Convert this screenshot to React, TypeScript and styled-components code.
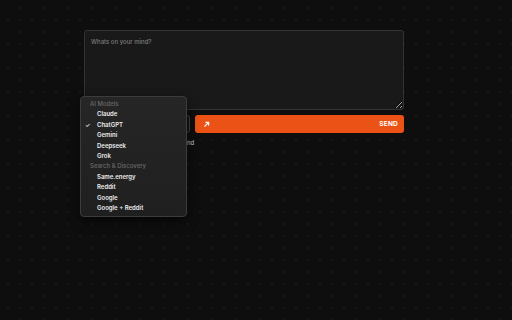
import styled, { createGlobalStyle } from "styled-components";

const GlobalStyle = createGlobalStyle`
  html, body {
    margin: 0;
    padding: 0;
    background: #0e0e0e;
  }
  body {
    font-family: "Inter", "Liberation Sans", sans-serif;
  }
`;

const aiModels = ["Claude", "ChatGPT", "Gemini", "Deepseek", "Grok"];
const search = ["Same.energy", "Reddit", "Google", "Google + Reddit"];
const selected = "ChatGPT";

function App() {
  return (
    <>
      <GlobalStyle />
      <Page>
        <Composer>
          <Textarea placeholder="Whats on your mind?" />
          <Controls>
            <SelectWrap>
              <SelectBox>
                <span>ChatGPT</span>
                <Chevron>⌄</Chevron>
              </SelectBox>
              <Menu>
                <GroupLabel>AI Models</GroupLabel>
                {aiModels.map((m) => (
                  <Item key={m}>
                    <Check>{m === selected ? "✓" : ""}</Check>
                    {m}
                  </Item>
                ))}
                <GroupLabel>Search &amp; Discovery</GroupLabel>
                {search.map((m) => (
                  <Item key={m}>
                    <Check />
                    {m}
                  </Item>
                ))}
              </Menu>
            </SelectWrap>
            <SendButton>
              <svg width="7" height="7" viewBox="0 0 10 10" fill="none">
                <path d="M2 8 L8 2 M3.5 2 H8 V6.5" stroke="white" strokeWidth="1.8" />
              </svg>
              <span>SEND</span>
            </SendButton>
          </Controls>
          <Hint>Press ⌘ + Enter to send, ⌘/ to expand</Hint>
        </Composer>
      </Page>
    </>
  );
}

export default App;

const Page = styled.div`
  width: 512px;
  height: 320px;
  box-sizing: border-box;
  padding: 30px 0 0 84px;
  background-color: #0e0e0e;
  background-image: radial-gradient(circle, #1c1c1c 0.6px, transparent 0.9px);
  background-size: 12px 12px;
  background-position: 2px 2px;
`;

const Composer = styled.div`
  width: 320px;
  display: flex;
  flex-direction: column;
`;

const Textarea = styled.textarea`
  width: 320px;
  height: 80px;
  box-sizing: border-box;
  background: #191919;
  border: 1px solid #333;
  border-radius: 3px;
  padding: 7px 6px;
  color: #ddd;
  font-family: "Inter", "Liberation Sans", sans-serif;
  font-size: 6px;
  font-weight: 500;
  resize: vertical;
  outline: none;
  &::placeholder {
    color: #7d7d7d;
  }
`;

const Controls = styled.div`
  display: flex;
  gap: 5px;
  margin-top: 5px;
  height: 18px;
`;

const SelectWrap = styled.div`
  position: relative;
  width: 106px;
`;

const SelectBox = styled.div`
  height: 18px;
  box-sizing: border-box;
  border: 1px solid #444;
  border-radius: 3px;
  background: #141414;
  color: #ddd;
  font-size: 6px;
  display: flex;
  align-items: center;
  justify-content: space-between;
  padding: 0 6px;
`;

const Chevron = styled.span`
  color: #999;
  font-size: 6px;
`;

const Menu = styled.div`
  position: absolute;
  left: -4px;
  top: -19px;
  width: 107px;
  box-sizing: border-box;
  padding: 2px 0 3px;
  background: linear-gradient(to bottom, #262626, #1f1f1f);
  border: 1px solid #3c3c3c;
  border-radius: 4px;
  box-shadow: 0 4px 12px rgba(0, 0, 0, 0.6);
  display: flex;
  flex-direction: column;
`;

const GroupLabel = styled.div`
  height: 10.4px;
  line-height: 10.4px;
  padding-left: 9px;
  font-size: 6px;
  font-weight: 500;
  color: #6a6a6a;
`;

const Item = styled.div`
  height: 10.4px;
  line-height: 10.4px;
  display: flex;
  align-items: center;
  font-size: 6px;
  font-weight: 600;
  color: #ececec;
`;

const Check = styled.span`
  width: 16px;
  padding-left: 4px;
  box-sizing: border-box;
  font-size: 6px;
  color: #ddd;
`;

const SendButton = styled.button`
  flex: 1;
  height: 18px;
  border: none;
  border-radius: 3px;
  background: #eb5316;
  color: #fff;
  display: flex;
  align-items: center;
  justify-content: space-between;
  padding: 0 6px 0 8px;
  font-family: "Inter", "Liberation Sans", sans-serif;
  font-size: 6.5px;
  font-weight: 700;
  letter-spacing: 0.2px;
`;

const Hint = styled.div`
  margin-top: 6px;
  font-size: 6px;
  font-weight: 500;
  color: #bbb;
`;
